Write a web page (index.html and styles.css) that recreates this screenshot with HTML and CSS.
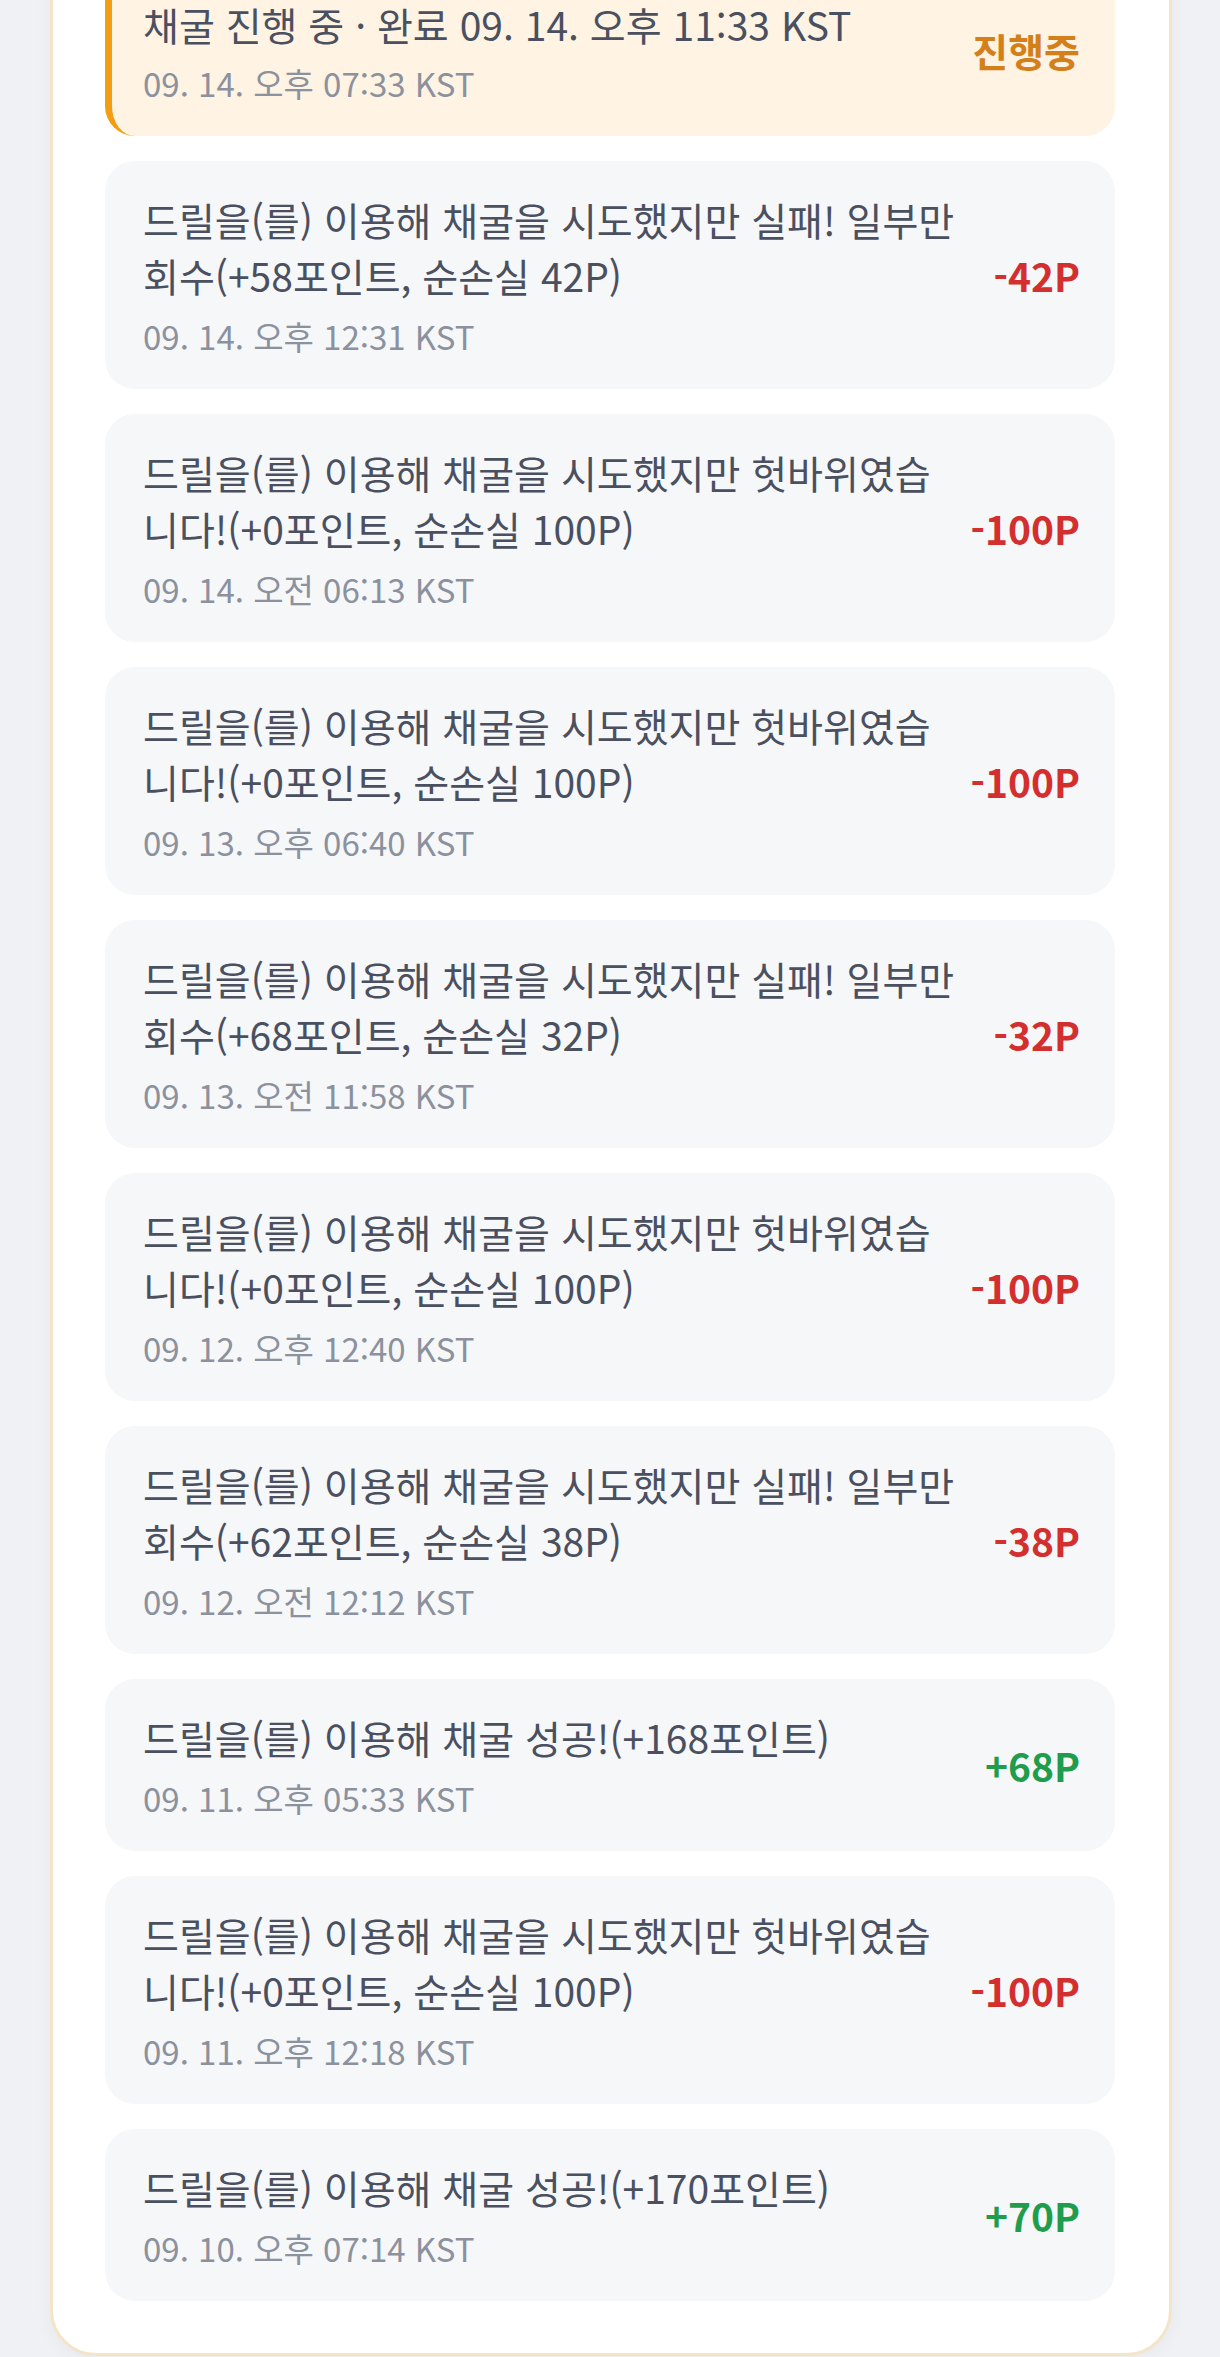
FILE: index.html
```html
<!DOCTYPE html>
<html lang="ko">
<head>
    <meta charset="utf-8">
    <title>채굴 기록</title>
    <link rel="stylesheet" href="styles.css">
</head>
<body>
    <div class="card">
        <div class="log-list">
            <div class="log-item pending">
                <div class="log-text">
                    <div class="log-title">채굴 진행 중 · 완료 09. 14. 오후 11:33 KST</div>
                    <div class="log-date">09. 14. 오후 07:33 KST</div>
                </div>
                <div class="log-amount pending-label">진행중</div>
            </div>

            <div class="log-item">
                <div class="log-text">
                    <div class="log-title">드릴을(를) 이용해 채굴을 시도했지만 실패! 일부만 회수(+58포인트, 순손실 42P)</div>
                    <div class="log-date">09. 14. 오후 12:31 KST</div>
                </div>
                <div class="log-amount minus">-42P</div>
            </div>

            <div class="log-item">
                <div class="log-text">
                    <div class="log-title">드릴을(를) 이용해 채굴을 시도했지만 헛바위였습니다!(+0포인트, 순손실 100P)</div>
                    <div class="log-date">09. 14. 오전 06:13 KST</div>
                </div>
                <div class="log-amount minus">-100P</div>
            </div>

            <div class="log-item">
                <div class="log-text">
                    <div class="log-title">드릴을(를) 이용해 채굴을 시도했지만 헛바위였습니다!(+0포인트, 순손실 100P)</div>
                    <div class="log-date">09. 13. 오후 06:40 KST</div>
                </div>
                <div class="log-amount minus">-100P</div>
            </div>

            <div class="log-item">
                <div class="log-text">
                    <div class="log-title">드릴을(를) 이용해 채굴을 시도했지만 실패! 일부만 회수(+68포인트, 순손실 32P)</div>
                    <div class="log-date">09. 13. 오전 11:58 KST</div>
                </div>
                <div class="log-amount minus">-32P</div>
            </div>

            <div class="log-item">
                <div class="log-text">
                    <div class="log-title">드릴을(를) 이용해 채굴을 시도했지만 헛바위였습니다!(+0포인트, 순손실 100P)</div>
                    <div class="log-date">09. 12. 오후 12:40 KST</div>
                </div>
                <div class="log-amount minus">-100P</div>
            </div>

            <div class="log-item">
                <div class="log-text">
                    <div class="log-title">드릴을(를) 이용해 채굴을 시도했지만 실패! 일부만 회수(+62포인트, 순손실 38P)</div>
                    <div class="log-date">09. 12. 오전 12:12 KST</div>
                </div>
                <div class="log-amount minus">-38P</div>
            </div>

            <div class="log-item">
                <div class="log-text">
                    <div class="log-title">드릴을(를) 이용해 채굴 성공!(+168포인트)</div>
                    <div class="log-date">09. 11. 오후 05:33 KST</div>
                </div>
                <div class="log-amount plus">+68P</div>
            </div>

            <div class="log-item">
                <div class="log-text">
                    <div class="log-title">드릴을(를) 이용해 채굴을 시도했지만 헛바위였습니다!(+0포인트, 순손실 100P)</div>
                    <div class="log-date">09. 11. 오후 12:18 KST</div>
                </div>
                <div class="log-amount minus">-100P</div>
            </div>

            <div class="log-item">
                <div class="log-text">
                    <div class="log-title">드릴을(를) 이용해 채굴 성공!(+170포인트)</div>
                    <div class="log-date">09. 10. 오후 07:14 KST</div>
                </div>
                <div class="log-amount plus">+70P</div>
            </div>
        </div>
    </div>
</body>
</html>
```

FILE: styles.css
```css
:root {
    --page-bg: #eff1f4;
    --card-bg: #ffffff;
    --card-border: #f4e5c8;
    --item-bg: #f6f7f9;
    --title-color: #4a5060;
    --date-color: #8b919d;
    --minus-color: #d32f2f;
    --plus-color: #1f9d4c;
    --pending-bg: #fff3e3;
    --pending-border: #f29d12;
    --pending-text: #d4801a;
}

body {
    margin: 0;
    background-color: var(--page-bg);
    font-family: "Noto Sans CJK KR", "Noto Sans", sans-serif;
    color: var(--title-color);
}

.card {
    margin: -91px 48px 3px 50px;
    padding: 52px 54px 52px 52px;
    background-color: var(--card-bg);
    border: 3px solid var(--card-border);
    border-radius: 46px;
    box-shadow: 0 4px 18px rgba(0, 0, 0, 0.04);
}

.log-list {
    display: flex;
    flex-direction: column;
    gap: 25px;
}

.log-item {
    display: flex;
    align-items: center;
    justify-content: space-between;
    padding: 30px 35px 30px 38px;
    background-color: var(--item-bg);
    border-radius: 30px;
}

.log-text {
    flex: 1;
    max-width: 815px;
}

.log-title {
    font-size: 39px;
    line-height: 56px;
}

.log-date {
    margin-top: 10px;
    font-size: 33px;
    line-height: 46px;
    color: var(--date-color);
}

.log-amount {
    flex: none;
    font-size: 39px;
    font-weight: 700;
}

.minus {
    color: var(--minus-color);
}

.plus {
    color: var(--plus-color);
}

/* in-progress entry sits at the scrolled top edge */
.pending {
    background-color: var(--pending-bg);
    border-left: 7px solid var(--pending-border);
    padding-top: 37px;
    padding-left: 31px;
}

.pending .log-title {
    line-height: 46px;
}

.pending .log-date {
    margin-top: 13px;
}

.pending-label {
    margin-top: -7px;
    color: var(--pending-text);
}
```
